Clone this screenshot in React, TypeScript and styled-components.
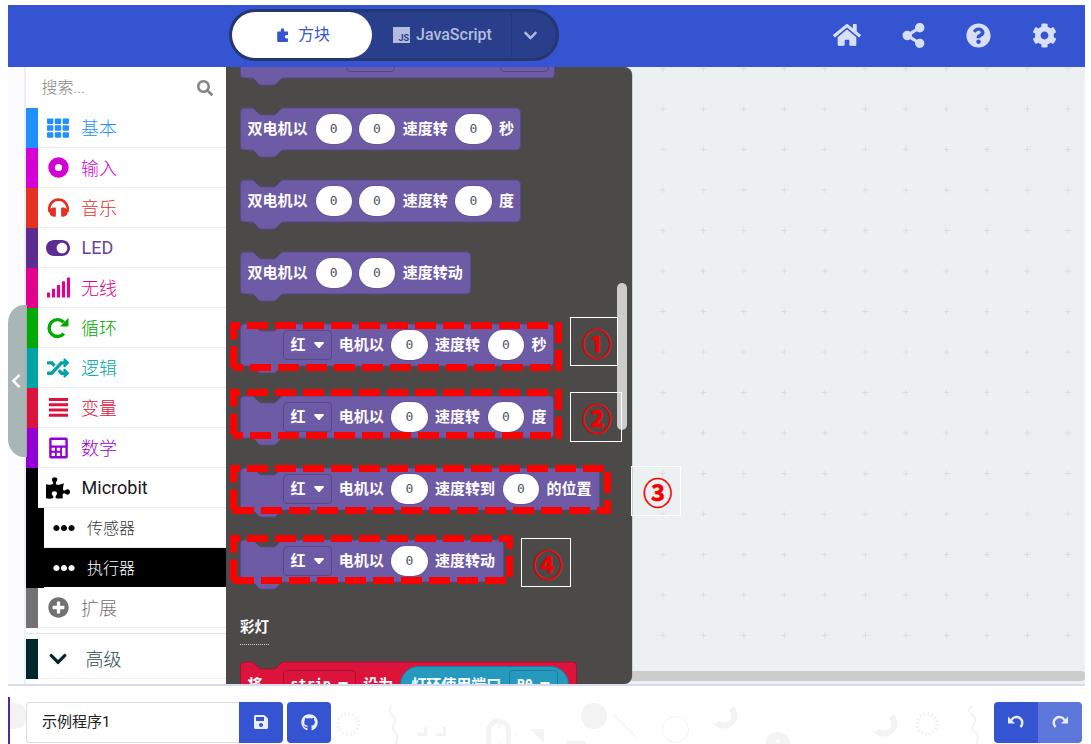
import React from 'react';
import styled, { createGlobalStyle } from 'styled-components';
import {
  FaChevronDown, FaChevronLeft, FaCog, FaEllipsisH, FaGithub, FaHeadphones, FaHome,
  FaPlusCircle, FaPuzzlePiece, FaQuestionCircle, FaRandom, FaSave, FaSearch, FaShareAlt,
  FaSignal, FaTh, FaToggleOn,
} from 'react-icons/fa';

const GlobalStyle = createGlobalStyle`
  * { box-sizing: border-box; }
  html, body { margin: 0; background: #fff; overflow: hidden; }
  body { font-family: Roboto, "Noto Sans CJK SC", sans-serif; }
  svg { display: block; flex: none; }
`;

const Page = styled.div`
  width: 1085px;
  height: 744px;
  padding: 5px 0 0 8px;
  overflow: hidden;
  display: flex;
  flex-direction: column;
`;

/* ---------- header ---------- */
const Header = styled.header`
  height: 62px;
  flex: none;
  background: #3454d1;
  display: flex;
  align-items: flex-start;
  justify-content: space-between;
  padding: 4px 28px 0 221px;
`;
const Toggle = styled.div`
  width: 330px;
  height: 52px;
  border: 3px solid #26366f;
  border-radius: 26px;
  background: #2a3f8c;
  display: flex;
  color: #b3bcdf;
  font-size: 16px;
`;
const BlocksTab = styled.div`
  width: 140px;
  border-radius: 23px;
  background: #fff;
  color: #3454d1;
  display: flex;
  align-items: center;
  justify-content: center;
  gap: 9px;
  padding-left: 3px;
`;
const TabLabel = styled.span`
  padding-bottom: 4px;
`;
const JsTab = styled.div`
  width: 140px;
  display: flex;
  align-items: center;
  gap: 6px;
  padding-left: 21px;
  border-right: 1px solid #26397f;
  font-weight: 500;
`;
const JsLabel = styled.span`
  padding-bottom: 2px;
`;
const JsBadge = styled.span`
  width: 17px;
  height: 16px;
  background: #b3bcdf;
  color: #2a3f8c;
  font: 700 9px/9px Roboto, sans-serif;
  padding: 7px 1px 0 0;
  text-align: right;
`;
const ToggleMore = styled.div`
  flex: 1;
  display: flex;
  align-items: center;
  padding-left: 11px;
`;
const HeaderIcons = styled.nav`
  display: flex;
  align-items: center;
  height: 52px;
  color: #d9dff6;
`;
const HeaderIcon = styled.span<{ $gap: number }>`
  margin-left: ${p => p.$gap}px;
`;

/* ---------- main area ---------- */
const Main = styled.main`
  position: relative;
  height: 619px;
  flex: none;
  display: flex;
  border-bottom: 2px solid #d9daf0;
`;
const Gutter = styled.div`
  width: 18px;
  background: #fcfcff;
  border-right: 2px solid #eeeff5;
  display: flex;
  align-items: flex-start;
  padding-top: 238px;
`;
const CollapseTab = styled.div`
  position: relative;
  z-index: 2;
  width: 19px;
  height: 152px;
  flex: none;
  border-radius: 16px 0 0 16px / 18px 0 0 18px;
  background: rgba(162, 176, 176, 0.93);
  color: #fff;
  display: flex;
  align-items: center;
`;
const Toolbox = styled.aside`
  width: 200px;
  background: #fff;
`;
const Search = styled.div`
  height: 41px;
  display: flex;
  align-items: center;
  justify-content: space-between;
  padding: 0 13px 0 15.5px;
  color: #858585;
  font-size: 16px;
  font-weight: 300;
`;
const SearchLabel = styled.span`
  padding-bottom: 3px;
`;
const Category = styled.div<{ $color: string; $bar?: number; $active?: boolean }>`
  height: 40px;
  display: flex;
  border-left: ${p => p.$bar ?? 12}px solid ${p => p.$color};
  color: ${p => (p.$active ? '#fff' : p.$color)};
`;
const CategoryBody = styled.div<{ $nested?: boolean; $active?: boolean; $gap?: number }>`
  flex: 1;
  display: flex;
  align-items: center;
  border-bottom: 1px solid ${p => (p.$active ? '#fff' : '#ebebeb')};
  background: ${p => (p.$active ? '#000' : '#fff')};
  font-size: ${p => (p.$nested ? 16 : 18)}px;
  font-weight: 300;
  line-height: 24px;
  gap: ${p => p.$gap ?? 3}px;
`;
const Name = styled.span<{ $latin?: boolean; $soft?: boolean }>`
  padding-top: ${p => (p.$latin ? 0 : 2)}px;
  padding-left: ${p => (p.$latin ? 0.6 : 0)}px;
  font-size: 18px;
  ${p => p.$latin && 'font-weight: 400; opacity: 0.9;'}
  ${p => p.$soft && 'opacity: 0.85;'}
`;
const NestedName = styled.span<{ $soft?: boolean }>`
  padding-top: 3px;
  ${p => p.$soft && 'opacity: 0.8;'}
`;
const IconCell = styled.span<{ $wide?: boolean }>`
  width: 40px;
  display: flex;
  justify-content: center;
  padding-left: ${p => (p.$wide ? 0 : 0.6)}px;
`;
const Rule = styled.div`
  height: 11px;
  padding-top: 5px;
  &::before { content: ''; display: block; height: 1px; background: #e2e2e2; }
`;

const Flyout = styled.section`
  width: 405.5px;
  position: relative;
  z-index: 1;
  overflow: hidden;
  background: #4c4949;
  border-radius: 0 8px 8px 0;
  display: flex;
  flex-direction: column;
  align-items: flex-start;
  padding-left: 14px;
  box-shadow: 0.5px 0 0 #aab0b2;
`;
const BlockRow = styled.div<{ $w: number; $h: number }>`
  position: relative;
  flex: none;
  width: ${p => p.$w}px;
  height: ${p => p.$h}px;
  margin-bottom: 30px;
  display: flex;
  align-items: center;
  padding-left: 7.5px;
  gap: 7.5px;
  color: #fff;
  font: 700 15px/20px "DejaVu Sans Mono", "Noto Sans CJK SC", monospace;
  white-space: nowrap;
  &:first-child { margin-top: -31px; }
`;
const BlockShape = styled.svg`
  position: absolute;
  left: 0;
  top: 0;
  overflow: visible;
`;
const Label = styled.span`
  position: relative;
`;
const Pill = styled.span`
  position: relative;
  width: 36.4px;
  height: 30px;
  border-radius: 15px;
  background: #fff;
  box-shadow: 0 0 0 0.5px #5b4c8d;
  color: #4c5369;
  font: 400 13px/30px "DejaVu Sans Mono", monospace;
  text-align: center;
  ${Label}:first-of-type + & { margin-left: 0.5px; }
  & + & { margin-left: -0.6px; }
`;
const Dropdown = styled.span<{ $edge: string; $indent?: number }>`
  position: relative;
  height: 30px;
  min-width: 49px;
  margin-left: ${p => p.$indent ?? 0}px;
  margin-right: -0.8px;
  padding: 0 7px 0 6.5px;
  border: 1px solid ${p => p.$edge};
  border-radius: 4px;
  display: flex;
  align-items: center;
  justify-content: space-between;
  gap: 7.6px;
`;
const Latin = styled.span`
  font-size: 13.4px;
`;
const Reporter = styled.span`
  position: relative;
  width: 169px;
  height: 37px;
  margin-left: -1px;
  border: 1px solid #1e7a99;
  border-radius: 19px;
  background: #2699bf;
  display: flex;
  align-items: center;
  padding-left: 10.5px;
  gap: 8px;
`;
const GroupLabel = styled.div`
  flex: none;
  height: 33px;
  margin: 0 0 17px;
  color: #fff;
  font: 700 14.5px/28px "Noto Sans CJK SC", sans-serif;
  border-bottom: 1px dotted #d0d0d0;
`;
const FlyoutScroll = styled.div`
  position: absolute;
  left: 391px;
  top: 216px;
  width: 10px;
  height: 147px;
  border-radius: 5px;
  background: #ccc;
`;
const Canvas = styled.div`
  flex: 1;
  margin-left: -12px;
  background: #ecf0f1;
  display: flex;
  flex-direction: column;
  overflow: hidden;
`;
const CanvasScroll = styled.div`
  height: 10px;
  flex: none;
  background: #ccc;
  border-radius: 4px;
`;

/* ---------- annotations drawn over the workspace ---------- */
const Dashes = styled.svg`
  position: absolute;
  z-index: 3;
`;
const Mark = styled.div<{ $x: number; $y: number; $w: number; $h: number }>`
  position: absolute;
  z-index: 3;
  left: ${p => p.$x}px;
  top: ${p => p.$y}px;
  width: ${p => p.$w}px;
  height: ${p => p.$h}px;
  border: 1px solid #fff;
  color: #f10000;
  -webkit-text-stroke: 0.5px #f10000;
  font: 700 29.5px/46px "Noto Sans CJK SC", sans-serif;
  padding: 1px 0 0 11px;
  white-space: nowrap;
`;

/* ---------- footer ---------- */
const Footer = styled.footer`
  position: relative;
  flex: 1;
  display: flex;
  align-items: flex-start;
  padding: 16px 3px 0 18px;
`;
const Doodles = styled.svg`
  position: absolute;
  left: 0;
  top: 0;
`;
const NameBox = styled.div`
  position: relative;
  width: 213px;
  height: 41px;
  border: 1px solid #dcdcdc;
  border-right: 0;
  border-radius: 4px 0 0 4px;
  background: #fff;
  color: #222;
  font-size: 15px;
  line-height: 38px;
  padding-left: 15px;
`;
const Button = styled.button<{ $r: string; $faded?: boolean }>`
  position: relative;
  width: 44px;
  height: 41px;
  padding: 0 0 1px 0;
  border: 0;
  border-radius: ${p => p.$r};
  background: ${p => (p.$faded ? '#5d76da' : '#3454d1')};
  color: #e9edfb;
  display: flex;
  align-items: center;
  justify-content: center;
`;
const Gap = styled.div<{ $w?: number }>`
  width: ${p => p.$w ?? 0}px;
  flex: ${p => (p.$w ? 'none' : 1)};
`;

const Caret = () => (
  <svg width="10" height="6" viewBox="0 0 10 6">
    <path d="M1 0h8q1.400 .2 .6 1.400L6 5.400q-1 1-2 0L.4 1.400Q-.4 .2 1 0z" fill="#fff" />
  </svg>
);

const Block = ({ w, h = 42, fill = '#6e5ba6', edge = '#58498a', children }: {
  w: number; h?: number; fill?: string; edge?: string; children?: React.ReactNode;
}) => (
  <BlockRow $w={w} $h={h}>
    <BlockShape width={w} height={h + 8}>
      <path
        transform="translate(.5 0)"
        d={`M0 4Q0 0 4 0H11Q12.500 0 13.500 1L18.500 6Q19.500 7 21 7H33Q34.500 7 35.500 6L40.500 1Q41.500 0 43 0H${w - 5}Q${w - 1} 0 ${w - 1} 4V${h - 4}Q${w - 1} ${h} ${w - 5} ${h}H43Q41.500 ${h} 40.500 ${h + 1}L35.500 ${h + 6}Q34.500 ${h + 7} 33 ${h + 7}H21Q19.500 ${h + 7} 18.500 ${h + 6}L13.500 ${h + 1}Q12.500 ${h} 11 ${h}H4Q0 ${h} 0 ${h - 4}Z`}
        fill={fill}
        stroke={edge}
      />
    </BlockShape>
    {children}
  </BlockRow>
);

const MotorSelect = () => (
  <Dropdown $edge="#564787" $indent={35.5}>
    红<Caret />
  </Dropdown>
);

/* Dashed frame: every side has its own dash phase. */
const Frame = ({ x, y, w, h, top = 11, right = 0, bottom = 11, left = 3.4 }: {
  x: number; y: number; w: number; h: number; top?: number; right?: number; bottom?: number; left?: number;
}) => (
  <Dashes width={w} height={h} style={{ left: x, top: y }}>
    <g stroke="#f00" strokeWidth="7" strokeDasharray="21 7">
      <path d={`M0 3.500H${w}`} strokeDashoffset={top} />
      <path d={`M${w - 3.5} 0V${h}`} strokeDashoffset={right} />
      <path d={`M3 ${h - 3.5}H${w}`} strokeDashoffset={bottom} />
      <path d={`M3.500 0V${h - 3}`} strokeDashoffset={left} />
    </g>
  </Dashes>
);

const Donut = () => (
  <svg width="21" height="21" viewBox="0 0 21 21">
    <circle cx="10.500" cy="10.500" r="6.900" fill="none" stroke="currentColor" strokeWidth="6.600" />
  </svg>
);
const Loop = () => (
  <svg width="22" height="22" viewBox="0 0 22 22">
    <path d="M16.800 16.600A8.400 8.400 0 1 1 16.600 5.300" fill="none" stroke="currentColor" strokeWidth="3.400" />
    <path d="M21.500 .8V8.400a1 1 0 0 1-1 1H13z" fill="currentColor" />
  </svg>
);
const Bars = () => (
  <svg width="19" height="19" viewBox="0 0 19 19">
    <path d="M0 1.500H19M0 6.750H19M0 12H19M0 17.250H19" stroke="currentColor" strokeWidth="2.900" />
  </svg>
);
const Calculator = () => (
  <svg width="19" height="22" viewBox="0 0 19 22">
    <path
      fillRule="evenodd"
      fill="currentColor"
      d="M2 .5h15a1.800 1.800 0 0 1 1.800 1.800v17.400a1.800 1.800 0 0 1-1.800 1.800H2a1.800 1.800 0 0 1-1.800-1.800V2.300A1.800 1.800 0 0 1 2 .5zM2.600 3v5.500h13.800V3zM2.600 10.800v3h3.400v-3zM7.800 10.800v3h3.400v-3zM2.600 15.800v3.200h3.400v-3.200zM7.800 15.800v3.200h3.400v-3.200zM13 10.800v8.200h3.400v-8.200z"
    />
  </svg>
);
const BlockPiece = () => (
  <svg width="12" height="14" viewBox="0 0 12 14">
    <path
      fill="currentColor"
      d="M1 3.500h2.800V2a1.700 1.700 0 0 1 3.400 0v1.500H11V7H9.600a1.700 1.700 0 0 0 0 3.400H11V13q0 1-1 1H1.200q-1 0-1-1V4.500q0-1 .8-1z"
    />
  </svg>
);
const Turn = ({ flip }: { flip?: boolean }) => (
  <svg width="16" height="14" viewBox="0 0 16 14" style={flip ? { transform: 'scaleX(-1)' } : undefined}>
    <path d="M3.500 5.200A5.700 5.700 0 1 1 12.400 12" fill="none" stroke="currentColor" strokeWidth="2.400" />
    <path d="M0 1.500V8.500H7z" fill="currentColor" />
  </svg>
);

const categories: { name: string; color: string; icon: React.ReactNode; wide?: boolean }[] = [
  { name: '基本', color: '#1e90ff', icon: <FaTh size={22} /> },
  { name: '输入', color: '#d400d4', icon: <Donut /> },
  { name: '音乐', color: '#e63022', icon: <FaHeadphones size={21} /> },
  { name: 'LED', color: '#5c2d91', icon: <FaToggleOn size={24} />, wide: true },
  { name: '无线', color: '#e3008c', icon: <FaSignal size={25} />, wide: true },
  { name: '循环', color: '#00aa00', icon: <Loop /> },
  { name: '逻辑', color: '#00a4a6', icon: <FaRandom size={22} />, wide: true },
  { name: '变量', color: '#dc143c', icon: <Bars /> },
  { name: '数学', color: '#9400d3', icon: <Calculator /> },
  { name: 'Microbit', color: '#000', icon: <FaPuzzlePiece size={24} />, wide: true },
];

const Sunburst = ({ cx, cy }: { cx: number; cy: number }) => (
  <circle cx={cx} cy={cy} r="10" fill="none" stroke="#f3f3f3" strokeWidth="4" strokeDasharray="1.960 1.960" />
);

export default function App() {
  return (
    <Page>
      <GlobalStyle />
      <Header>
        <Toggle>
          <BlocksTab><BlockPiece /><TabLabel>方块</TabLabel></BlocksTab>
          <JsTab><JsBadge>JS</JsBadge><JsLabel>JavaScript</JsLabel></JsTab>
          <ToggleMore><FaChevronDown size={15} /></ToggleMore>
        </Toggle>
        <HeaderIcons>
          <HeaderIcon $gap={0}><FaHome size={28} /></HeaderIcon>
          <HeaderIcon $gap={40}><FaShareAlt size={25} /></HeaderIcon>
          <HeaderIcon $gap={40}><FaQuestionCircle size={25} /></HeaderIcon>
          <HeaderIcon $gap={41}><FaCog size={25} /></HeaderIcon>
        </HeaderIcons>
      </Header>

      <Main>
        <Gutter><CollapseTab><FaChevronLeft size={16} /></CollapseTab></Gutter>
        <Toolbox>
          <Search><SearchLabel>搜索...</SearchLabel><FaSearch size={16} /></Search>
          {categories.map(({ name, color, icon, wide }) => (
            <Category key={name} $color={color}>
              <CategoryBody>
                <IconCell $wide={wide}>{icon}</IconCell>
                <Name $latin={/^[A-Z]/.test(name)}>{name}</Name>
              </CategoryBody>
            </Category>
          ))}
          <Category $color="#000" $bar={18}>
            <CategoryBody $nested>
              <IconCell $wide><FaEllipsisH size={22} /></IconCell><NestedName $soft>传感器</NestedName>
            </CategoryBody>
          </Category>
          <Category $color="#000" $bar={18} $active>
            <CategoryBody $nested $active>
              <IconCell $wide><FaEllipsisH size={22} /></IconCell><NestedName>执行器</NestedName>
            </CategoryBody>
          </Category>
          <Category $color="#717171">
            <CategoryBody><IconCell><FaPlusCircle size={21} /></IconCell><Name>扩展</Name></CategoryBody>
          </Category>
          <Rule />
          <Category $color="#00272b">
            <CategoryBody $gap={7.5}>
              <IconCell><FaChevronDown size={20} /></IconCell><Name $soft>高级</Name>
            </CategoryBody>
          </Category>
        </Toolbox>

        <Flyout>
          <Block w={315}>
            <Dropdown as="i" $edge="#564787" $indent={98} />
            <Dropdown as="i" $edge="#564787" $indent={99} />
          </Block>
          <Block w={281}>
            <Label>双电机以</Label><Pill>0</Pill><Pill>0</Pill><Label>速度转</Label><Pill>0</Pill><Label>秒</Label>
          </Block>
          <Block w={281}>
            <Label>双电机以</Label><Pill>0</Pill><Pill>0</Pill><Label>速度转</Label><Pill>0</Pill><Label>度</Label>
          </Block>
          <Block w={231}>
            <Label>双电机以</Label><Pill>0</Pill><Pill>0</Pill><Label>速度转动</Label>
          </Block>
          <Block w={314}>
            <MotorSelect /><Label>电机以</Label><Pill>0</Pill><Label>速度转</Label><Pill>0</Pill><Label>秒</Label>
          </Block>
          <Block w={314}>
            <MotorSelect /><Label>电机以</Label><Pill>0</Pill><Label>速度转</Label><Pill>0</Pill><Label>度</Label>
          </Block>
          <Block w={360}>
            <MotorSelect /><Label>电机以</Label><Pill>0</Pill><Label>速度转到</Label><Pill>0</Pill><Label>的位置</Label>
          </Block>
          <Block w={264}>
            <MotorSelect /><Label>电机以</Label><Pill>0</Pill><Label>速度转动</Label>
          </Block>
          <GroupLabel>彩灯</GroupLabel>
          <Block w={337} h={45} fill="#dc143c" edge="#a80f2e">
            <Label>将</Label>
            <Dropdown $edge="#a80f2e" $indent={13}><Latin>strip</Latin><Caret /></Dropdown>
            <Label>设为</Label>
            <Reporter>
              灯环使用端口
              <Dropdown $edge="#1e7a99"><Latin>P0</Latin><Caret /></Dropdown>
            </Reporter>
          </Block>
          <FlyoutScroll />
        </Flyout>

        <Canvas>
          <svg width="466" height="604">
            <defs>
              <pattern id="grid" x="22.600" y="-18.700" width="40.500" height="40.500" patternUnits="userSpaceOnUse">
                <path d="M17.200 20.250H23.200M20.250 17.200V23.200" stroke="#d9dde0" strokeWidth="1" />
              </pattern>
            </defs>
            <rect width="466" height="604" fill="url(#grid)" />
          </svg>
          <CanvasScroll />
        </Canvas>

        <Frame x={222} y={255} w={332} h={49} />
        <Frame x={222} y={322} w={332} h={50} />
        <Frame x={222} y={398} w={381} h={49} right={21} bottom={0} />
        <Frame x={222} y={468} w={283} h={49} right={7} bottom={0} />
        <Mark $x={562} $y={250} $w={48} $h={49}>①</Mark>
        <Mark $x={562} $y={325} $w={52} $h={50}>②</Mark>
        <Mark $x={623} $y={399} $w={50} $h={50}>③</Mark>
        <Mark $x={513} $y={471} $w={50} $h={49}>④</Mark>
      </Main>

      <Footer>
        <Doodles width="1077" height="58">
          <rect x="0" y="11" width="2" height="47" fill="#53279b" />
          <path d="M2 17h4a12.500 12.500 0 0 1 0 26H2z" fill="#f3f3f3" />
          <Sunburst cx={340} cy={38} />
          <Sunburst cx={919} cy={38} />
          <g fill="none" stroke="#f3f3f3">
            <path d="M384 20q-5 5 0 9t2 9 1 8 1 12M964 20q-6 5 0 9t2 9 1 8 1 12" strokeWidth="2" />
            <path d="M417.500 41v7.500h-8M436.500 41v7.500h-8" strokeWidth="3" />
            <path d="M480.500 58V45a10 10 0 0 1 20 0v13" strokeWidth="5" />
            <path d="M605 28l23 23" strokeWidth="1.500" />
            <circle cx="667.500" cy="43.500" r="13" strokeWidth="1" />
            <path d="M723.500 22a9.500 9.500 0 0 1-15 14.500" strokeWidth="6" />
            <path d="M883.500 30a9.500 9.500 0 0 1-15 14.500" strokeWidth="6" />
          </g>
          <g fill="#f3f3f3">
            <path d="M490 37l4 3-4 3zM522 43h14v14zM490 56l3 2h-3zM559 55h19v3h-19z" />
            <circle cx="508.500" cy="48.500" r="1" />
            <circle cx="586" cy="30" r="13" />
            <path fillRule="evenodd" d="M758 58a12 12 0 1 1 24 0zM768 55a2 2 0 1 0 4 0 2 2 0 1 0-4 0" />
          </g>
        </Doodles>
        <NameBox>示例程序1</NameBox>
        <Button $r="0 4px 4px 0"><FaSave size={16} /></Button>
        <Gap $w={4} />
        <Button $r="4px"><FaGithub size={17} /></Button>
        <Gap />
        <Button $r="4px 0 0 4px"><Turn /></Button>
        <Button $r="0 4px 4px 0" $faded><Turn flip /></Button>
      </Footer>
    </Page>
  );
}
